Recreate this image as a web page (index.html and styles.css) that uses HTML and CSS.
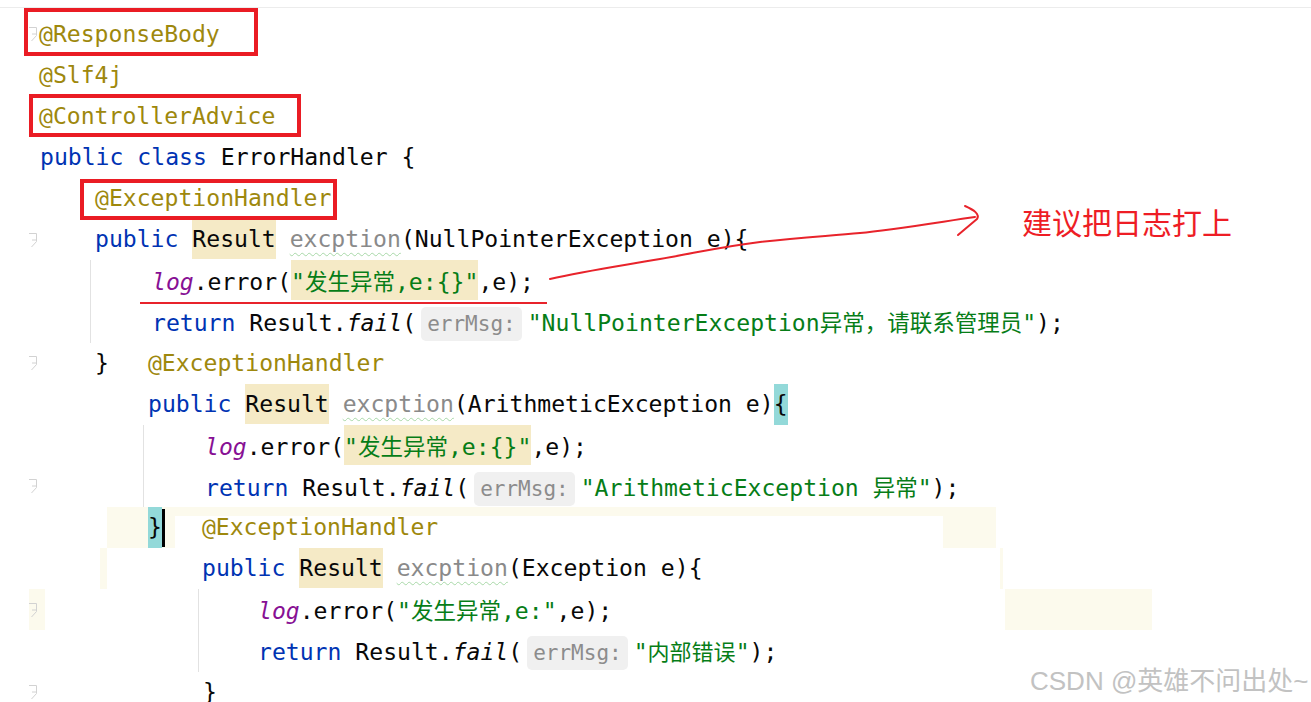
FILE: index.html
```html
<!DOCTYPE html>
<html lang="zh-CN">
<head>
<meta charset="utf-8">
<title>ErrorHandler</title>
<link rel="stylesheet" href="styles.css">
</head>
<body>
<div class="page">
  <div class="editor">
    <div class="line"><span class="gut"><svg class="fold" viewBox="0 0 9 16" width="9" height="16"><path d="M0 1.5H7.5V9.5L2.5 15M3 8H7"/></svg></span><span class="code i0"><span class="ann">@ResponseBody</span></span></div>
    <div class="line"><span class="gut"></span><span class="code i0"><span class="ann">@Slf4j</span></span></div>
    <div class="line"><span class="gut"></span><span class="code i0"><span class="ann">@ControllerAdvice</span></span></div>
    <div class="line"><span class="gut"></span><span class="code i0b"><span class="kw">public</span> <span class="kw">class</span> ErrorHandler {</span></div>
    <div class="line"><span class="gut"></span><span class="code i1"><span class="ann">@ExceptionHandler</span></span></div>
    <div class="line"><span class="gut"><svg class="fold" viewBox="0 0 9 16" width="9" height="16"><path d="M0 1.5H7.5V9.5L2.5 15M3 8H7"/></svg></span><span class="code i1"><span class="kw">public</span> <span class="hl">Result</span> <span class="unused">excption</span>(NullPointerException e){</span></div>
    <div class="group g1">
      <div class="line"><span class="gut"></span><span class="code i2"><span class="fld">log</span>.error(<span class="str hl">"<span class="cjk">发生异常</span>,e:{}"</span>,e);</span></div>
      <div class="line"><span class="gut"></span><span class="code i2"><span class="kw">return</span> Result.<span class="it">fail</span>(<span class="hint">errMsg:</span><span class="str">"NullPointerException<span class="cjk">异常，请联系管理员</span>"</span>);</span></div>
    </div>
    <div class="line"><span class="gut"><svg class="fold" viewBox="0 0 9 16" width="9" height="16"><path d="M0 1.5H7.5V9.5L2.5 15M3 8H7"/></svg></span><span class="code i1">}<span class="ann gap9">@ExceptionHandler</span></span></div>
    <div class="line"><span class="gut"></span><span class="code i3"><span class="kw">public</span> <span class="hl">Result</span> <span class="unused">excption</span>(ArithmeticException e)<span class="brace">{</span></span></div>
    <div class="group g2">
      <div class="line"><span class="gut"></span><span class="code i4"><span class="fld">log</span>.error(<span class="str hl">"<span class="cjk">发生异常</span>,e:{}"</span>,e);</span></div>
      <div class="line"><span class="gut"><svg class="fold" viewBox="0 0 9 16" width="9" height="16"><path d="M0 1.5H7.5V9.5L2.5 15M3 8H7"/></svg></span><span class="code i4"><span class="kw">return</span> Result.<span class="it">fail</span>(<span class="hint">errMsg:</span><span class="str">"ArithmeticException <span class="cjk">异常</span>"</span>);</span></div>
    </div>
    <div class="line"><span class="gut"></span><span class="code i8"><span class="curline"><span class="brace">}</span><span class="caret"></span><span class="ann gap13">@ExceptionHandler</span></span></span></div>
    <div class="line deco14"><span class="gut"></span><span class="code i5"><span class="kw">public</span> <span class="hl">Result</span> <span class="unused">excption</span>(Exception e){</span></div>
    <div class="group g3">
      <div class="line deco15"><span class="gut"><svg class="fold" viewBox="0 0 9 16" width="9" height="16"><path d="M0 1.5H7.5V9.5L2.5 15M3 8H7"/></svg></span><span class="code i6"><span class="fld">log</span>.error(<span class="str">"<span class="cjk">发生异常</span>,e:"</span>,e);</span></div>
      <div class="line"><span class="gut"></span><span class="code i6"><span class="kw">return</span> Result.<span class="it">fail</span>(<span class="hint">errMsg:</span><span class="str">"<span class="cjk sm">内部错误</span>"</span>);</span></div>
    </div>
    <div class="line"><span class="gut"><svg class="fold" viewBox="0 0 9 16" width="9" height="16"><path d="M0 1.5H7.5V9.5L2.5 15M3 8H7"/></svg></span><span class="code i7">}</span></div>
  </div>

  <div class="redbox box1"></div>
  <div class="redbox box2"></div>
  <div class="redbox box3"></div>
  <div class="redline"></div>
  <svg class="arrow" viewBox="545 195 445 90" width="445" height="90">
    <path d="M550 279 C 585 271, 620 266, 660 259 S 720 247, 760 242 S 830 236, 860 233 S 940 222, 975 217"/>
    <path d="M965 206 C 974 210, 980 214, 977 219 L 958 235"/>
  </svg>
  <div class="note">建议把日志打上</div>
  <div class="watermark">CSDN @英雄不问出处~</div>
</div>
</body>
</html>
```
FILE: styles.css
```css
* { box-sizing: border-box; }

html, body {
  margin: 0;
  padding: 0;
  background: #ffffff;
}

.page {
  position: relative;
  width: 1311px;
  height: 702px;
  overflow: hidden;
  font-family: "DejaVu Sans Mono", "Noto Sans CJK SC", monospace;
  font-size: 23.1px;
  color: #080808;
}

.editor {
  margin-top: 7px;
  border-top: 1px solid #ececec;
  padding-top: 5.5px;
}

.line {
  display: flex;
  height: 41.125px;
}

.gut {
  flex: 0 0 39px;
  display: flex;
  align-items: center;
  padding-left: 29px;
}

.fold {
  display: block;
  fill: none;
  stroke: #d2d2d2;
  stroke-width: 1;
}

.code {
  display: block;
  flex: 1 1 auto;
  height: 41px;
  line-height: 41px;
  white-space: pre;
}

.i0 { padding-left: 0; }
.i0b { padding-left: 1px; }
.i1 { padding-left: 56px; }
.i2 { padding-left: 113px; }
.i3 { padding-left: 109px; }
.i4 { padding-left: 166px; }
.i5 { padding-left: 163px; }
.i6 { padding-left: 219px; }
.i7 { padding-left: 164px; }
.i8 { padding-left: 68px; }

.group { background-repeat: no-repeat; }
.g1 { background-image: linear-gradient(#e2e2e2, #e2e2e2); background-position: 90px 0; background-size: 1px 100%; }
.g2 { background-image: linear-gradient(#e2e2e2, #e2e2e2); background-position: 143px 0; background-size: 1px 100%; }
.g3 { background-image: linear-gradient(#e2e2e2, #e2e2e2); background-position: 198px 0; background-size: 1px 100%; }

.ann { color: #9e880d; }
.kw { color: #0033b3; }
.str { color: #067d17; }
.fld { color: #871094; font-style: italic; }
.it { font-style: italic; }
.cjk { font-family: "Noto Sans CJK SC", sans-serif; font-size: 22.5px; }
.cjk.sm { font-size: 22px; }

.unused {
  color: #8a8a8a;
  text-decoration: underline wavy #a8d8a8;
  text-decoration-thickness: 1px;
  text-underline-offset: 5px;
}

.hl {
  display: inline-block;
  height: 40px;
  line-height: 40px;
  background: #f5eac6;
}

.brace {
  display: inline-block;
  height: 41px;
  line-height: 41px;
  background: #93d9d9;
}

.hint {
  display: inline-block;
  height: 34px;
  line-height: 34px;
  margin: 0 6px 0 5px;
  padding: 0 6px;
  border-radius: 5px;
  background: #f0f0f0;
  color: #8c8c8c;
  font-size: 21px;
}

.gap9 { margin-left: 39px; }
.gap13 { margin-left: 37px; }

.curline {
  display: block;
  width: 889px;
  height: 41px;
  padding-left: 41px;
  background:
    linear-gradient(#fcfaed, #fcfaed) 0 0 / 100% 9px no-repeat,
    linear-gradient(#fcfaed, #fcfaed) 0 0 / 68px 100% no-repeat,
    linear-gradient(#fcfaed, #fcfaed) right 0 / 53px 100% no-repeat;
}

.caret {
  display: inline-block;
  vertical-align: top;
  width: 3px;
  height: 38px;
  margin-top: 1.5px;
  background: #000;
}

.deco14 {
  background:
    linear-gradient(#fcfaed, #fcfaed) 100px 0 / 7px 100% no-repeat,
    linear-gradient(#fcfaed, #fcfaed) 1000px 0 / 3px 100% no-repeat;
}

.deco15 {
  background:
    linear-gradient(#fcfaed, #fcfaed) 29px 0 / 16px 100% no-repeat,
    linear-gradient(#fcfaed, #fcfaed) 1005px 0 / 147px 100% no-repeat,
    linear-gradient(#e2e2e2, #e2e2e2) 198px 0 / 1px 100% no-repeat;
}

.redbox {
  position: absolute;
  border: 4px solid #ea1c24;
}
.box1 { left: 24px; top: 8px; width: 234px; height: 48px; }
.box2 { left: 29px; top: 94px; width: 272px; height: 43px; }
.box3 { left: 80px; top: 179px; width: 257px; height: 41px; }

.redline {
  position: absolute;
  left: 140px;
  top: 302px;
  width: 407px;
  height: 2px;
  background: #e8232b;
}

.arrow {
  position: absolute;
  left: 545px;
  top: 195px;
  fill: none;
  stroke: #e8232b;
  stroke-width: 2;
  stroke-linecap: round;
  stroke-linejoin: round;
}

.note {
  position: absolute;
  left: 1022px;
  top: 206px;
  font-family: "Noto Sans CJK SC", sans-serif;
  font-size: 30px;
  line-height: 30px;
  color: #ee1d25;
}

.watermark {
  position: absolute;
  left: 1030px;
  top: 665px;
  font-family: "Liberation Sans", "Noto Sans CJK SC", sans-serif;
  font-size: 26px;
  line-height: 32px;
  color: #c2c2c2;
  white-space: nowrap;
}
```
